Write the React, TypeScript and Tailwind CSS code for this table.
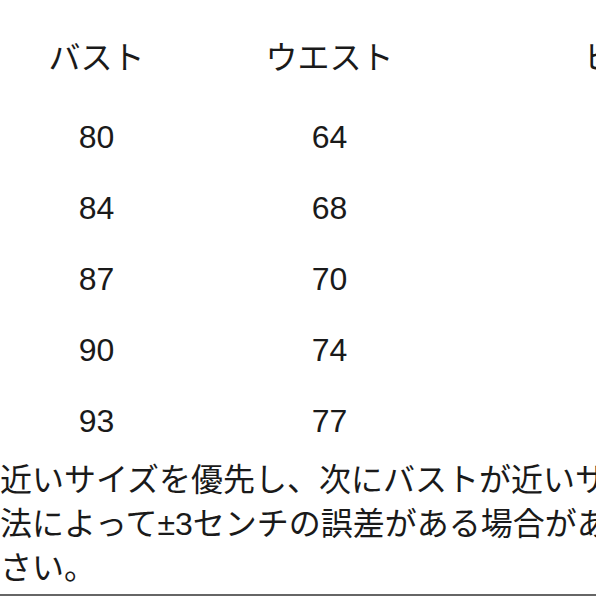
const rows = [
  ['80', '64'],
  ['84', '68'],
  ['87', '70'],
  ['90', '74'],
  ['93', '77'],
];

const font = { fontFamily: '"Liberation Sans", "Noto Sans CJK JP", sans-serif' };

export default function App() {
  return (
    <div className="w-[596px] h-[596px] bg-white overflow-hidden flex flex-col text-[#1a1a1a]" style={font}>
      <div className="pt-[22px]">
        <div className="grid grid-cols-[193px_273px_330px] h-[72px] items-center text-[32px] leading-none whitespace-nowrap">
          <div className="text-center">バスト</div>
          <div className="text-center">ウエスト</div>
          <div className="text-center">ヒップ</div>
        </div>
        <div className="mt-[7px]">
          {rows.map((r) => (
            <div key={r[0]} className="grid grid-cols-[193px_273px] h-[71.2px] items-center text-[32px] leading-none">
              {r.map((v, i) => (
                <div key={i} className="text-center">{v}</div>
              ))}
            </div>
          ))}
        </div>
      </div>
      <div className="mt-[1px] text-[32px] leading-[44px] whitespace-nowrap">
        <p>近いサイズを優先し、次にバストが近いサイズをお選びください。</p>
        <p>法によって±3センチの誤差がある場合があります。</p>
        <p>さい。</p>
      </div>
      <div className="mt-auto h-[2px] bg-[#666]" />
    </div>
  );
}
